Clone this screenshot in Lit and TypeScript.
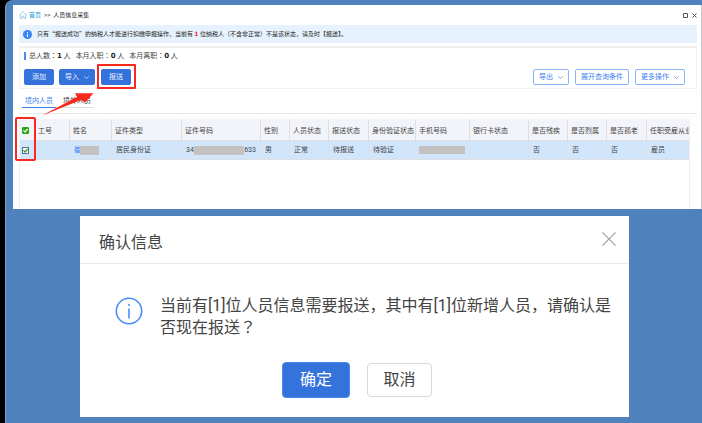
import { LitElement, html, css } from "lit";
import { customElement, state } from "lit/decorators.js";

interface Column {
  label: string;
  width: number;
}

const COLUMNS: Column[] = [
  { label: "工号", width: 34 },
  { label: "姓名", width: 42 },
  { label: "证件类型", width: 70 },
  { label: "证件号码", width: 79 },
  { label: "性别", width: 29 },
  { label: "人员状态", width: 39 },
  { label: "报送状态", width: 40 },
  { label: "身份验证状态", width: 47 },
  { label: "手机号码", width: 54 },
  { label: "银行卡状态", width: 59 },
  { label: "是否残疾", width: 39 },
  { label: "是否烈属", width: 39 },
  { label: "是否孤老", width: 40 },
];

@customElement("app-root")
export class AppRoot extends LitElement {
  @state() private allChecked = true;
  @state() private rowChecked = true;

  static styles = css`
    :host {
      display: block;
      min-height: 100vh;
      box-sizing: border-box;
      padding-left: 5px;
      background: #000;
      color: #444;
      font-family: Roboto, "Noto Sans CJK SC", sans-serif;
      font-size: 7px;
      line-height: 10px;
    }
    * {
      box-sizing: border-box;
    }
    button {
      font: inherit;
      color: inherit;
      margin: 0;
      padding: 0;
      background: none;
      border: 0;
      white-space: nowrap;
    }
    svg {
      display: block;
      flex: none;
    }
    .slide {
      min-height: 100vh;
      padding: 5px 0 6px 7px;
      background: #4f81bd;
      border-left: 1px solid #7a9ccb;
      border-top-left-radius: 8px;
    }
    .panel {
      background: #fff;
      min-height: 204px;
      padding: 0 4px 0 6px;
      border-right: 1px solid #c8ccd2;
      display: flex;
      flex-direction: column;
    }
    .crumbs {
      display: flex;
      align-items: center;
      height: 20px;
      font-size: 6px;
      color: #222;
    }
    .crumbs a {
      color: #1b9bd8;
      text-decoration: none;
      margin: 0 3px 0 2px;
    }
    .path {
      flex: 1;
      margin-left: 3px;
    }
    .tools {
      display: flex;
      gap: 4px;
      color: #555;
    }
    .notice {
      display: flex;
      align-items: center;
      gap: 5px;
      height: 18px;
      padding-left: 4px;
      background: #e6f2fd;
      font-size: 6px;
      color: #222;
    }
    .notice p {
      margin: 0;
      font-family: "Noto Sans CJK SC", sans-serif;
      white-space: nowrap;
    }
    b {
      font-family: "DejaVu Sans", sans-serif;
    }
    .notice b {
      color: #f22;
    }
    .card {
      margin-top: 3px;
      border: 1px solid #f1f1f1;
      border-top-width: 2px;
      height: 43px;
      padding: 4px 11px 0 4px;
    }
    .summary {
      display: flex;
      align-items: center;
      gap: 5px;
      height: 8px;
      padding-left: 3px;
      border-left: 2px solid #3f8cff;
      font-family: Roboto, "Noto Sans CJK JP", sans-serif;
    }
    .summary b {
      color: #222;
    }
    .actions {
      display: flex;
      align-items: center;
      margin-top: 9px;
    }
    .left,
    .right {
      display: flex;
      align-items: center;
      gap: 6px;
    }
    .left {
      flex: 1;
      gap: 5px;
    }
    .btn {
      display: flex;
      align-items: center;
      justify-content: center;
      gap: 5px;
      height: 16px;
      min-width: 30px;
      padding: 0 5px;
      border-radius: 2px;
      border: 1px solid #8ab5fa;
      color: #3f82f2;
    }
    .btn.fill {
      background: #3472dc;
      border-color: #3472dc;
      color: #e8f0ff;
    }
    .spot {
      position: relative;
      margin-left: 1px;
    }
    .spot::after {
      content: "";
      position: absolute;
      inset: -6px -6px -5px -5px;
      border: 2px solid #f8291f;
      border-radius: 1px;
      pointer-events: none;
    }
    .tabs {
      position: relative;
      display: flex;
      height: 25px;
      padding: 6px 0 0 3px;
      border-bottom: 1px solid #e8e8e8;
    }
    .tab {
      height: 13px;
      padding: 0 3px;
      border-bottom: 1px solid #ddd;
      color: #444;
    }
    .tab + .tab {
      padding-left: 7px;
    }
    .tab.on {
      color: #3f82f2;
      border-bottom-color: #3f82f2;
    }
    .arrow {
      position: absolute;
      left: 21px;
      top: 4px;
    }
    .grid-area {
      position: relative;
      flex: 1;
      display: flex;
      margin: 5px 7px 0 0;
    }
    .grid {
      flex: 1;
      min-width: 0;
      border-left: 1px solid #eee;
      border-right: 1px solid #eee;
      overflow: hidden;
    }
    .frame {
      position: absolute;
      left: -4px;
      top: -2px;
      width: 21px;
      height: 44px;
      border: 2px solid #f8291f;
      border-radius: 2px;
      pointer-events: none;
    }
    table {
      width: 100%;
      table-layout: fixed;
      border-collapse: separate;
      border-spacing: 0;
    }
    th,
    td {
      padding: 0 0 0 3px;
      text-align: left;
      font-weight: 400;
      white-space: nowrap;
      border-right: 1px solid #dcdfe6;
      border-bottom: 1px solid #dcdfe6;
    }
    th {
      height: 22px;
      padding-top: 2px;
      background: #f3f4f9;
    }
    td {
      height: 19px;
      padding-left: 4px;
      background: #d1e5fb;
    }
    th:last-child,
    td:last-child {
      border-right: 0;
    }
    th.num {
      padding-left: 2px;
    }
    th.pick,
    td.pick {
      padding-left: 2px;
      border-right-color: transparent;
    }
    .cell {
      display: flex;
      align-items: center;
    }
    .mask {
      height: 9px;
      background: #c4c2c1;
    }
    .mask.name {
      width: 19px;
      margin-left: -1px;
    }
    .mask.id {
      flex: 1;
    }
    .mask.phone {
      width: 46px;
      height: 8px;
      margin-left: -1px;
    }
    td.id-cell {
      padding-right: 4px;
    }
    .blue {
      color: #3f82f2;
    }
    input {
      appearance: none;
      display: block;
      width: 7px;
      height: 7px;
      margin: 0;
      border: 1px solid #5c6f8c;
      background: #fff;
    }
    input.all {
      border-color: #2aa515;
      background: #2aa515;
      border-radius: 1px;
    }
    .check {
      display: grid;
      width: 7px;
    }
    .check > * {
      grid-area: 1 / 1;
    }
    .check > svg {
      pointer-events: none;
    }
    .dialog {
      margin: 7px 73px 0 67px;
      background: #fff;
      color: #444;
      font-size: 16px;
      line-height: 22px;
    }
    .dialog header {
      display: flex;
      align-items: center;
      justify-content: space-between;
      height: 48px;
      padding: 6px 13px 0 19px;
      border-bottom: 1px solid #e8eaf2;
    }
    h2 {
      margin: 0;
      font-size: 16px;
      font-weight: 400;
    }
    .close {
      color: #aaa;
      margin-top: -8px;
    }
    .body {
      display: flex;
      gap: 17px;
      padding: 31px 15px 0 35px;
    }
    .body p {
      margin: 0;
    }
    .mark {
      font-family: "Noto Sans CJK JP", sans-serif;
      line-height: 1;
    }
    .info {
      margin-top: 2px;
    }
    .dialog footer {
      display: flex;
      justify-content: center;
      align-items: center;
      gap: 17px;
      padding: 23px 0 19px 5px;
    }
    .ok,
    .cancel {
      width: 68px;
      height: 36px;
      border-radius: 4px;
      background: #3573dc;
      border: 1px solid #4a8af4;
      color: #fff;
    }
    .cancel {
      width: 65px;
      height: 34px;
      background: #fff;
      border-color: #d8d8d8;
      color: #444;
    }
  `;

  private check(color: string) {
    return html`<svg width="7" height="7" viewBox="0 0 7 7">
      <path d="M1.5 3.4 L3 5 L5.6 2" fill="none" stroke=${color} stroke-width="1.2" />
    </svg>`;
  }

  private chevron() {
    return html`<svg width="5" height="5" viewBox="0 0 5 5">
      <path d="M0.3 1.3 L2.5 3.6 L4.7 1.3" fill="none" stroke="currentColor" stroke-width="0.7" />
    </svg>`;
  }

  render() {
    return html`
      <div class="slide">
        <main class="panel">
          <nav class="crumbs">
            <svg width="8" height="8" viewBox="0 0 8 8" fill="none" stroke="#7db8e6" stroke-width="0.7">
              <path d="M0.3 4.4 L4 0.6 L7.7 4.4 M1.3 3.8 V7.4 H3.1 V5.2 H4.9 V7.4 H6.7 V3.8" />
            </svg>
            <a href="#">首页</a>&gt;&gt;<span class="path">人员信息采集</span>
            <span class="tools">
              <svg width="5" height="5" viewBox="0 0 5 5" fill="none" stroke="currentColor">
                <path d="M0.5 0.5 H4.5 V4.5 H0.5 Z" />
              </svg>
              <svg width="5" height="5" viewBox="0 0 5 5" fill="none" stroke="currentColor">
                <path d="M0.5 0.5 L4.5 4.5 M4.5 0.5 L0.5 4.5" />
              </svg>
            </span>
          </nav>

          <div class="notice">
            <svg width="9" height="9" viewBox="0 0 9 9">
              <circle cx="4.5" cy="4.5" r="4.5" fill="#3a86f5" />
              <path d="M4.5 3.9 V7 M4.5 2 V3" stroke="#fff" />
            </svg>
            <p>只有“报送成功”的纳税人才能进行扣缴申报操作，当前有 <b>1</b> 位纳税人（不含非正常）不是该状态，请及时【报送】。</p>
          </div>

          <section class="card">
            <div class="summary">
              <span>总人数：<b>1</b> 人</span>
              <span>本月入职：<b>0</b> 人</span>
              <span>本月离职：<b>0</b> 人</span>
            </div>
            <div class="actions">
              <div class="left">
                <button class="btn fill">添加</button>
                <button class="btn fill">导入 ${this.chevron()}</button>
                <button class="btn fill spot">报送</button>
              </div>
              <div class="right">
                <button class="btn">导出 ${this.chevron()}</button>
                <button class="btn">展开查询条件</button>
                <button class="btn">更多操作 ${this.chevron()}</button>
              </div>
            </div>
          </section>

          <div class="tabs">
            <button class="tab on">境内人员</button>
            <button class="tab">境外人员</button>
            <svg class="arrow" width="56" height="24" viewBox="0 0 56 24">
              <path d="M1.5 22.8 L37 4 L35 0.3 L53.5 0.3 L45 9.5 L41 7 Z" fill="#f8291f" />
            </svg>
          </div>

          <div class="grid-area">
            <div class="grid">
              <table>
                <colgroup>
                  <col width="16" />
                  ${COLUMNS.map((c) => html`<col width=${c.width} />`)}
                  <col />
                </colgroup>
                <thead>
                  <tr>
                    <th class="pick">
                      <span class="check">
                        <input class="all" type="checkbox" aria-label="全选" .checked=${this.allChecked}
                          @change=${() => (this.allChecked = !this.allChecked)} />
                        ${this.allChecked ? this.check("#fff") : ""}
                      </span>
                    </th>
                    ${COLUMNS.map((c, i) => html`<th class=${i === 0 ? "num" : ""}>${c.label}</th>`)}
                    <th>任职受雇从业</th>
                  </tr>
                </thead>
                <tbody>
                  <tr>
                    <td class="pick">
                      <span class="check">
                        <input type="checkbox" aria-label="选择" .checked=${this.rowChecked}
                          @change=${() => (this.rowChecked = !this.rowChecked)} />
                        ${this.rowChecked ? this.check("#2f9a2a") : ""}
                      </span>
                    </td>
                    <td></td>
                    <td><div class="cell"><span class="blue">崔</span><span class="mask name"></span></div></td>
                    <td>居民身份证</td>
                    <td class="id-cell"><div class="cell">34<span class="mask id"></span>633</div></td>
                    <td>男</td>
                    <td>正常</td>
                    <td>待报送</td>
                    <td>待验证</td>
                    <td><div class="mask phone"></div></td>
                    <td></td>
                    <td>否</td>
                    <td>否</td>
                    <td>否</td>
                    <td>雇员</td>
                  </tr>
                </tbody>
              </table>
            </div>
            <span class="frame"></span>
          </div>
        </main>

        <section class="dialog" role="dialog" aria-labelledby="title">
          <header>
            <h2 id="title">确认信息</h2>
            <button class="close" aria-label="关闭">
              <svg width="14" height="14" viewBox="0 0 14 14">
                <path d="M0.5 0.5 L13.5 13.5 M13.5 0.5 L0.5 13.5" stroke="currentColor" stroke-width="1.2" />
              </svg>
            </button>
          </header>
          <div class="body">
            <svg class="info" width="28" height="28" viewBox="0 0 28 28" fill="none" stroke="#4a8df8" stroke-width="1.6">
              <circle cx="14" cy="14" r="12.7" />
              <path d="M14 11.5 V21.5 M14 7 V9" />
            </svg>
            <p>当前有[1]位人员信息需要报送，其中有[1]位新增人员，请确认是否现在报送<span class="mark">？</span></p>
          </div>
          <footer>
            <button class="ok">确定</button>
            <button class="cancel">取消</button>
          </footer>
        </section>
      </div>
    `;
  }
}
